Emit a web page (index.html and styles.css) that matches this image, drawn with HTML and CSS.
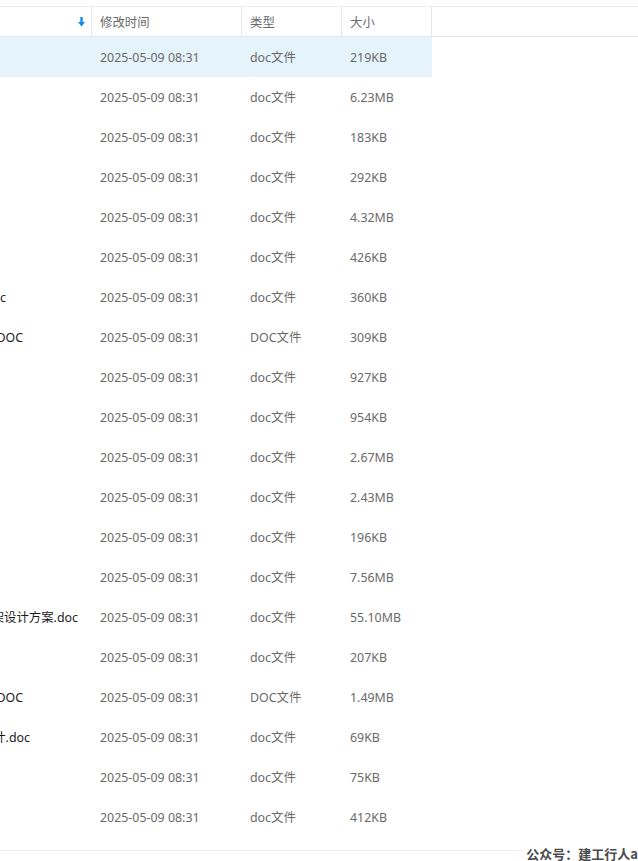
FILE: index.html
```html
<!DOCTYPE html>
<html lang="zh-CN">
<head>
<meta charset="utf-8">
<title>文件列表</title>
<link rel="stylesheet" href="styles.css">
</head>
<body>
<div class="page">
  <div class="header">
    <div class="hcell hname">
      <svg class="sort" width="7" height="10" viewBox="0 0 7 10"><rect x="2.3" y="0" width="2.4" height="5.5" fill="#1689e8"/><polygon points="0,5 7,5 3.5,9.5" fill="#1689e8"/></svg>
    </div>
    <div class="hcell">修改时间</div>
    <div class="hcell">类型</div>
    <div class="hcell">大小</div>
    <div class="hcell hrest"></div>
  </div>
  <div class="rows">
    <div class="row selected"><div class="name"><span>施工组织设计总体方案.doc</span></div><div class="cell">2025-05-09 08:31</div><div class="cell">doc文件</div><div class="cell">219KB</div></div>
    <div class="row"><div class="name"><span>高层住宅楼施工组织设计.doc</span></div><div class="cell">2025-05-09 08:31</div><div class="cell">doc文件</div><div class="cell">6.23MB</div></div>
    <div class="row"><div class="name"><span>办公楼工程施工组织设计.doc</span></div><div class="cell">2025-05-09 08:31</div><div class="cell">doc文件</div><div class="cell">183KB</div></div>
    <div class="row"><div class="name"><span>市政道路工程施工方案.doc</span></div><div class="cell">2025-05-09 08:31</div><div class="cell">doc文件</div><div class="cell">292KB</div></div>
    <div class="row"><div class="name"><span>框架结构施工组织设计.doc</span></div><div class="cell">2025-05-09 08:31</div><div class="cell">doc文件</div><div class="cell">4.32MB</div></div>
    <div class="row"><div class="name"><span>厂房钢结构施工方案.doc</span></div><div class="cell">2025-05-09 08:31</div><div class="cell">doc文件</div><div class="cell">426KB</div></div>
    <div class="row"><div class="name e5"><span>住宅小区施工组织设计.doc</span></div><div class="cell">2025-05-09 08:31</div><div class="cell">doc文件</div><div class="cell">360KB</div></div>
    <div class="row"><div class="name e22"><span>综合楼施工组织设计.DOC</span></div><div class="cell">2025-05-09 08:31</div><div class="cell">DOC文件</div><div class="cell">309KB</div></div>
    <div class="row"><div class="name"><span>桥梁工程施工组织设计.doc</span></div><div class="cell">2025-05-09 08:31</div><div class="cell">doc文件</div><div class="cell">927KB</div></div>
    <div class="row"><div class="name"><span>学校教学楼施工组织设计.doc</span></div><div class="cell">2025-05-09 08:31</div><div class="cell">doc文件</div><div class="cell">954KB</div></div>
    <div class="row"><div class="name"><span>医院门诊楼施工组织设计.doc</span></div><div class="cell">2025-05-09 08:31</div><div class="cell">doc文件</div><div class="cell">2.67MB</div></div>
    <div class="row"><div class="name"><span>商业综合体施工组织设计.doc</span></div><div class="cell">2025-05-09 08:31</div><div class="cell">doc文件</div><div class="cell">2.43MB</div></div>
    <div class="row"><div class="name"><span>污水处理厂施工方案.doc</span></div><div class="cell">2025-05-09 08:31</div><div class="cell">doc文件</div><div class="cell">196KB</div></div>
    <div class="row"><div class="name"><span>地下车库施工组织设计.doc</span></div><div class="cell">2025-05-09 08:31</div><div class="cell">doc文件</div><div class="cell">7.56MB</div></div>
    <div class="row"><div class="name e77"><span>某工程施工组织框架设计方案.doc</span></div><div class="cell">2025-05-09 08:31</div><div class="cell">doc文件</div><div class="cell">55.10MB</div></div>
    <div class="row"><div class="name"><span>体育馆工程施工组织设计.doc</span></div><div class="cell">2025-05-09 08:31</div><div class="cell">doc文件</div><div class="cell">207KB</div></div>
    <div class="row"><div class="name e22"><span>装饰装修工程施工组织设计.DOC</span></div><div class="cell">2025-05-09 08:31</div><div class="cell">DOC文件</div><div class="cell">1.49MB</div></div>
    <div class="row"><div class="name e29"><span>给排水工程施工组织设计.doc</span></div><div class="cell">2025-05-09 08:31</div><div class="cell">doc文件</div><div class="cell">69KB</div></div>
    <div class="row"><div class="name"><span>园林绿化工程施工方案.doc</span></div><div class="cell">2025-05-09 08:31</div><div class="cell">doc文件</div><div class="cell">75KB</div></div>
    <div class="row"><div class="name"><span>电气安装工程施工方案.doc</span></div><div class="cell">2025-05-09 08:31</div><div class="cell">doc文件</div><div class="cell">412KB</div></div>
  </div>
  <div class="footer"></div>
  <div class="watermark">公众号：建工行人a</div>
</div>
</body>
</html>
```
FILE: styles.css
```css
html, body {
  margin: 0;
  padding: 0;
  background: #ffffff;
}
body {
  width: 638px;
  height: 861px;
  overflow: hidden;
  font-family: "Noto Sans", "Noto Sans CJK SC", sans-serif;
  font-size: 12.4px;
  color: #6a6a6a;
}
.page {
  position: relative;
  width: 638px;
  height: 861px;
  padding-top: 6px;
  box-sizing: border-box;
}
.header {
  display: grid;
  grid-template-columns: 92px 150px 100px 90px 1fr;
  height: 31px;
  box-sizing: border-box;
  border-top: 1px solid #ececec;
  border-bottom: 1px solid #e8e8ee;
}
.hcell {
  display: flex;
  align-items: center;
  padding-left: 8px;
  border-right: 1px solid #e8e8e8;
  color: #6a6a6a;
  white-space: nowrap;
}
.hname {
  justify-content: flex-end;
  padding-right: 6px;
}
.hrest {
  border-right: none;
}
.sort {
  display: block;
}
.rows {
  display: flex;
  flex-direction: column;
}
.row {
  display: grid;
  grid-template-columns: 92px 150px 100px 90px;
  width: 432px;
  height: 40px;
  align-items: center;
}
.row.selected {
  background: #e5f3fb;
}
.cell {
  padding-left: 8px;
  white-space: nowrap;
}
.name {
  display: flex;
  justify-content: flex-end;
  overflow: hidden;
  white-space: nowrap;
  color: #1a1a1a;
  padding-right: 120px;
}
.name span {
  flex: none;
}
.name.e5 { padding-right: 86px; }
.name.e22 { padding-right: 69px; }
.name.e29 { padding-right: 62px; }
.name.e77 { padding-right: 14px; }
.footer {
  margin-top: 13px;
  border-top: 1px solid #ececec;
}
.watermark {
  position: absolute;
  right: 0;
  bottom: -1px;
  font-family: "Noto Sans CJK SC", sans-serif;
  font-weight: bold;
  font-size: 13px;
  line-height: 16px;
  color: #4a4a4a;
  background: #ffffff;
  padding-left: 4px;
}
```
